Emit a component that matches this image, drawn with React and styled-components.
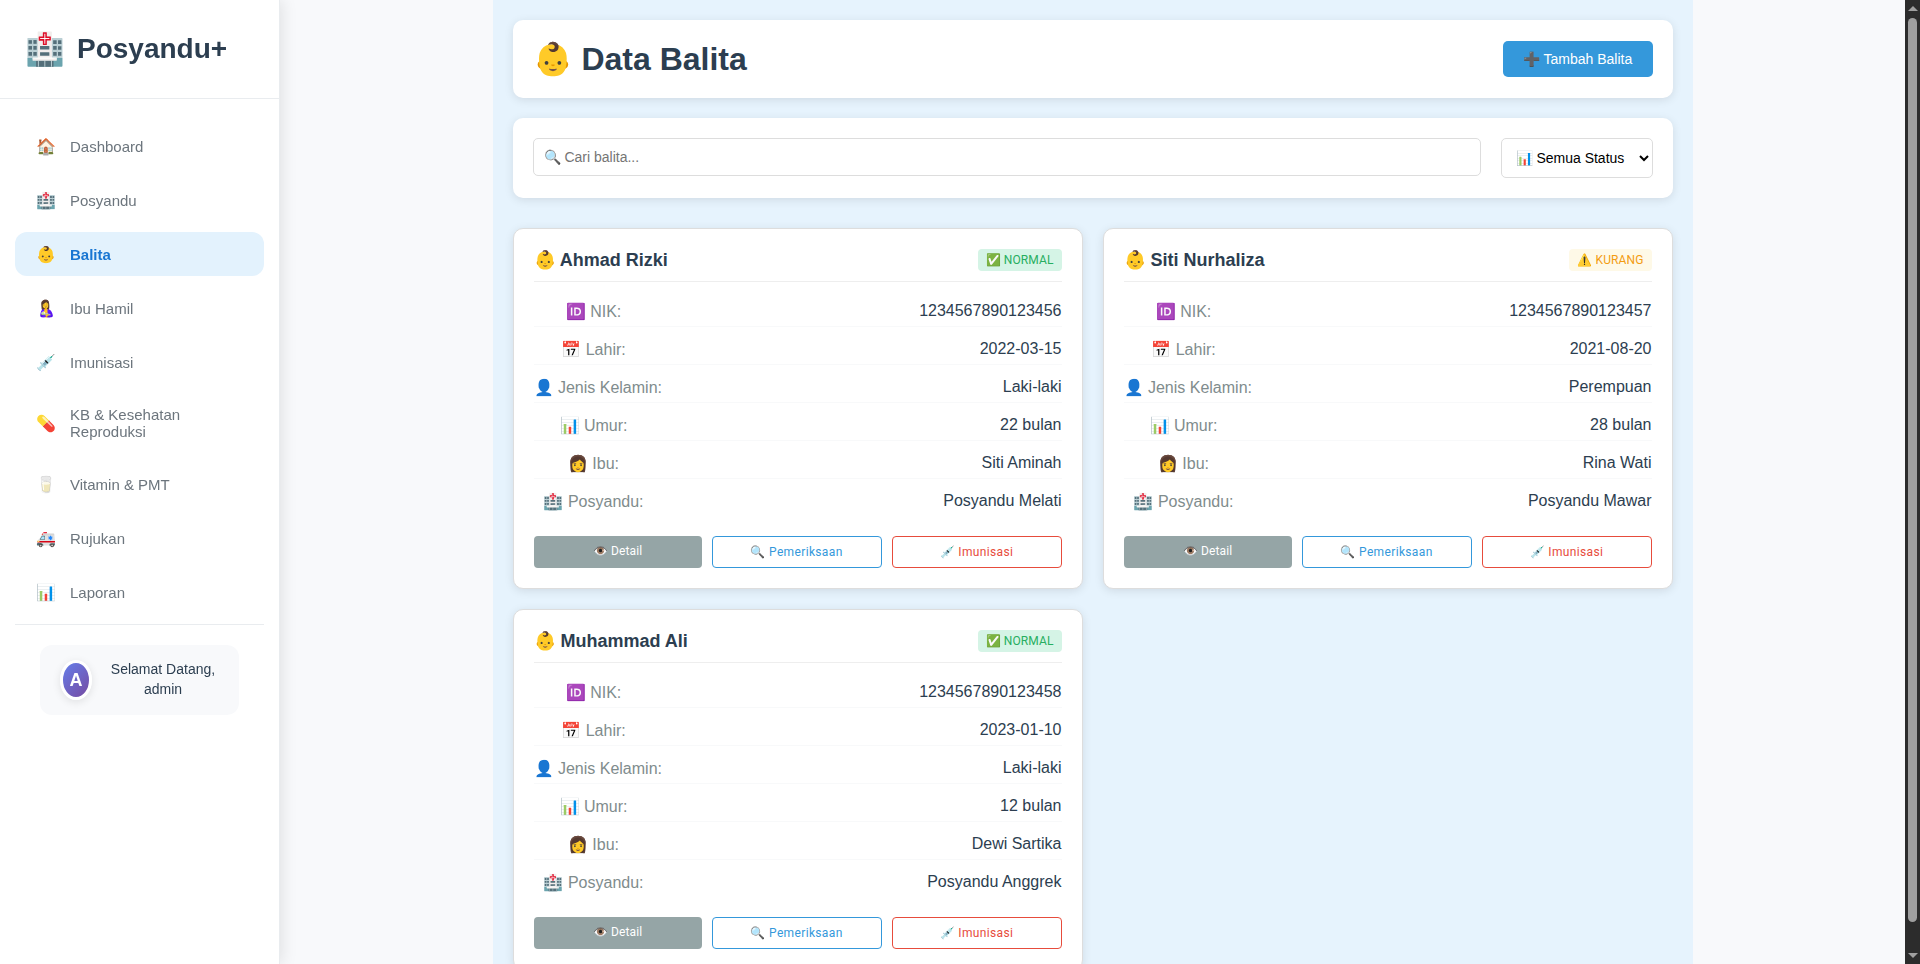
import React from 'react';
import styled, { createGlobalStyle, css } from 'styled-components';

const GlobalStyle = createGlobalStyle`
  *, *::before, *::after { box-sizing: border-box; }
  html, body { margin: 0; padding: 0; height: 100%; overflow: hidden; }
  body {
    background: #f8f9fb;
    font-family: "Liberation Sans", Arial, sans-serif;
    font-size: 16px;
    color: #2c3e50;
    text-align: center;
  }
  h1, h2, h3 { margin: 0; }
`;

const Shell = styled.div`
  display: grid;
  grid-template-columns: 280px minmax(0, 1fr) 15px;
  height: 100vh;
  overflow: hidden;
`;

const Sidebar = styled.aside`
  z-index: 1;
  background: #fff;
  border-right: 1px solid #e9ecef;
  box-shadow: 2px 0 15px rgba(0, 0, 0, 0.1);
  will-change: transform;
`;

const Brand = styled.div`
  display: flex;
  align-items: center;
  gap: 12px;
  height: 99px;
  padding: 0 25px;
  border-bottom: 1px solid #e9ecef;
`;

const BrandIcon = styled.span`
  font-size: 32px;
  line-height: 37px;
`;

const BrandName = styled.span`
  font-size: 28px;
  font-weight: 700;
`;

const Nav = styled.nav`
  display: flex;
  flex-direction: column;
  gap: 10px;
  padding: 25px 15px 0;
`;

const NavItem = styled.a`
  display: flex;
  align-items: center;
  gap: 14px;
  min-height: 44px;
  padding: 12px 20px;
  border-radius: 12px;
  font-size: 15px;
  line-height: 17px;
  text-align: left;
  color: #6c757d;
  ${({ $active }) => $active && css`
    background: #e3f2fd;
    color: #1976d2;
    font-weight: 600;
  `}
`;

const NavIcon = styled.span`
  flex: 0 0 21px;
  display: flex;
  justify-content: center;
  padding: 2px 0 0 1px;
  font-size: 16px;
  font-weight: 400;
  line-height: 18px;
`;

const SidebarFooter = styled.div`
  margin: 10px 15px 0;
  padding: 20px 25px;
  border-top: 1px solid #e9ecef;
`;

const UserBox = styled.div`
  display: flex;
  align-items: center;
  gap: 15px;
  height: 70px;
  padding: 15px 20px;
  border-radius: 12px;
  background: #f8f9fb;
`;

const Avatar = styled.div`
  flex: 0 0 32px;
  display: flex;
  align-items: center;
  justify-content: center;
  height: 40px;
  border: 3px solid #fff;
  border-radius: 50%;
  background: linear-gradient(135deg, #667eea 0%, #764ba2 100%);
  box-shadow: 0 2px 8px rgba(0, 0, 0, 0.1);
  color: #fff;
  font-size: 18px;
  font-weight: 700;
`;

const Welcome = styled.div`
  flex: 1;
  padding-bottom: 2px;
  font-size: 14px;
  line-height: 20px;
`;

const Main = styled.main`
  width: 1200px;
  height: 100vh;
  margin: 0 auto;
  padding: 20px;
  overflow: hidden;
  background: #e6f3fd;
`;

const Panel = styled.section`
  display: flex;
  border-radius: 10px;
  padding: 20px;
  background: #fff;
  box-shadow: 0 2px 10px rgba(0, 0, 0, 0.1);
`;

const PageHeader = styled(Panel)`
  align-items: center;
  justify-content: space-between;
  height: 78px;
  margin-bottom: 20px;
`;

const PageTitle = styled.h1`
  font-size: 32px;
  line-height: 38px;
`;

const AddButton = styled.button`
  width: 150px;
  height: 36px;
  padding: 0;
  border: 0;
  border-radius: 5px;
  background: #3498db;
  color: #fff;
  font: 14px "Liberation Sans", Arial, sans-serif;
`;

const FilterBar = styled(Panel)`
  align-items: flex-start;
  gap: 20px;
  height: 80px;
  margin-bottom: 30px;
`;

const SearchInput = styled.input`
  flex: 1;
  height: 38px;
  padding: 10px;
  border: 1px solid #ddd;
  border-radius: 5px;
  background: #fff;
  font: 14px "Liberation Sans", Arial, sans-serif;
`;

const StatusSelect = styled.select`
  width: 152px;
  height: 40px;
  padding: 10px;
  border: 1px solid #ddd;
  border-radius: 5px;
  background: #fff;
  color: #000;
  font: 14px "Liberation Sans", Arial, sans-serif;
`;

const CardGrid = styled.div`
  display: grid;
  grid-template-columns: 1fr 1fr;
  gap: 20px;
`;

const Card = styled.article`
  height: 361px;
  padding: 20px;
  border: 1px solid #ddd;
  border-radius: 10px;
  background: #fff;
  box-shadow: 0 2px 10px rgba(0, 0, 0, 0.1);
`;

const CardHeader = styled.header`
  display: flex;
  align-items: center;
  justify-content: space-between;
  height: 33px;
  margin-bottom: 15px;
  padding-bottom: 10px;
  border-bottom: 1px solid #eee;
`;

const ChildName = styled.h3`
  font-size: 18px;
  line-height: 22px;
`;

const badgeTones = {
  normal: { bg: '#d5f4e6', fg: '#27ae60' },
  kurang: { bg: '#fef9e7', fg: '#f39c12' },
};

const Badge = styled.span`
  height: 22px;
  padding: 4px 8px;
  border-radius: 4px;
  font-family: Roboto, "Liberation Sans", sans-serif;
  font-size: 12px;
  line-height: 14px;
  letter-spacing: 0.11px;
  background: ${({ $tone }) => badgeTones[$tone].bg};
  color: ${({ $tone }) => badgeTones[$tone].fg};
`;

const InfoRow = styled.div`
  display: flex;
  justify-content: space-between;
  height: 30px;
  margin-bottom: 8px;
  padding: 5px 0;
  border-bottom: 1px solid #f8f9fa;
  &:last-child {
    height: 29px;
    margin-bottom: 20px;
    border-bottom: 0;
  }
`;

const InfoLabel = styled.span`
  min-width: 120px;
  color: #7f8c8d;
`;

const InfoValue = styled.span`
  color: #2c3e50;
`;

const Actions = styled.div`
  display: flex;
  gap: 10px;
  height: 32px;
`;

const Action = styled.a`
  flex: 1;
  padding: 8px;
  border-radius: 4px;
  font-family: Roboto, "Liberation Sans", sans-serif;
  font-size: 12px;
  line-height: 14px;
  ${({ $tone }) => ($tone
    ? css`
      border: 1px solid ${$tone};
      background: #fff;
      color: ${$tone};
      letter-spacing: 0.35px;
    `
    : css`
      background: #95a5a6;
      color: #fff;
      letter-spacing: 0.15px;
    `)}
`;

const ScrollTrack = styled.div`
  display: flex;
  flex-direction: column;
  align-items: center;
  height: 100vh;
  padding: 6px 0 6px;
  background: #2c2c2c;
`;

const ScrollArrow = styled.i`
  width: 0;
  height: 0;
  border: 0 solid transparent;
  border-left-width: 5px;
  border-right-width: 5px;
  ${({ $up }) => ($up
    ? 'border-bottom: 5px solid #9f9f9f; margin-bottom: 7px;'
    : 'border-top: 5px solid #9f9f9f; margin-top: auto;')}
`;

const ScrollThumb = styled.div`
  width: 9px;
  height: 904px;
  border-radius: 5px;
  background: #9f9f9f;
`;

const menu = [
  ['🏠', 'Dashboard'],
  ['🏥', 'Posyandu'],
  ['👶', 'Balita'],
  ['🤱', 'Ibu Hamil'],
  ['💉', 'Imunisasi'],
  ['💊', 'KB & Kesehatan Reproduksi'],
  ['🥛', 'Vitamin & PMT'],
  ['🚑', 'Rujukan'],
  ['📊', 'Laporan'],
];

const children = [
  { name: 'Ahmad Rizki', status: 'normal', values: ['1234567890123456', '2022-03-15', 'Laki-laki', '22 bulan', 'Siti Aminah', 'Posyandu Melati'] },
  { name: 'Siti Nurhaliza', status: 'kurang', values: ['1234567890123457', '2021-08-20', 'Perempuan', '28 bulan', 'Rina Wati', 'Posyandu Mawar'] },
  { name: 'Muhammad Ali', status: 'normal', values: ['1234567890123458', '2023-01-10', 'Laki-laki', '12 bulan', 'Dewi Sartika', 'Posyandu Anggrek'] },
];

const labels = ['🆔 NIK:', '📅 Lahir:', '👤 Jenis Kelamin:', '📊 Umur:', '👩 Ibu:', '🏥 Posyandu:'];
const badgeText = { normal: '✅ NORMAL', kurang: '⚠️ KURANG' };

function ChildCard({ child }) {
  return (
    <Card>
      <CardHeader>
        <ChildName>👶 {child.name}</ChildName>
        <Badge $tone={child.status}>{badgeText[child.status]}</Badge>
      </CardHeader>
      <div>
        {labels.map((label, i) => (
          <InfoRow key={label}>
            <InfoLabel>{label}</InfoLabel>
            <InfoValue>{child.values[i]}</InfoValue>
          </InfoRow>
        ))}
      </div>
      <Actions>
        <Action>👁️ Detail</Action>
        <Action $tone="#3498db">🔍 Pemeriksaan</Action>
        <Action $tone="#e74c3c">💉 Imunisasi</Action>
      </Actions>
    </Card>
  );
}

export default function App() {
  return (
    <>
      <GlobalStyle />
      <Shell>
        <Sidebar>
          <Brand>
            <BrandIcon>🏥</BrandIcon>
            <BrandName>Posyandu+</BrandName>
          </Brand>
          <Nav>
            {menu.map(([icon, label]) => (
              <NavItem key={label} $active={label === 'Balita'}>
                <NavIcon>{icon}</NavIcon>
                <span>{label}</span>
              </NavItem>
            ))}
          </Nav>
          <SidebarFooter>
            <UserBox>
              <Avatar>A</Avatar>
              <Welcome>Selamat Datang, admin</Welcome>
            </UserBox>
          </SidebarFooter>
        </Sidebar>
        <Main>
          <PageHeader>
            <PageTitle>👶 Data Balita</PageTitle>
            <AddButton>➕ Tambah Balita</AddButton>
          </PageHeader>
          <FilterBar>
            <SearchInput placeholder="🔍 Cari balita..." />
            <StatusSelect defaultValue="all">
              <option value="all">📊 Semua Status</option>
            </StatusSelect>
          </FilterBar>
          <CardGrid>
            {children.map((child) => <ChildCard key={child.name} child={child} />)}
          </CardGrid>
        </Main>
        <ScrollTrack>
          <ScrollArrow $up />
          <ScrollThumb />
          <ScrollArrow />
        </ScrollTrack>
      </Shell>
    </>
  );
}
